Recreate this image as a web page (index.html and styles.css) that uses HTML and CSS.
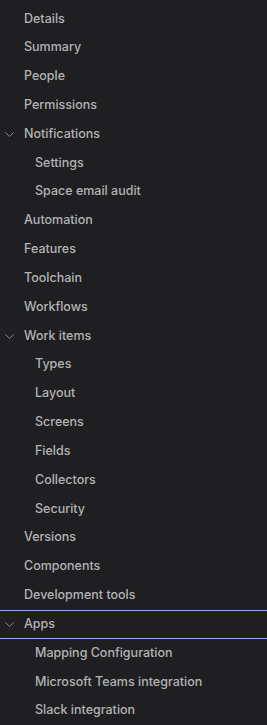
FILE: index.html
```html
<!DOCTYPE html>
<html lang="en">
<head>
    <meta charset="UTF-8">
    <meta name="viewport" content="width=device-width, initial-scale=1.0">
    <title>Space settings</title>
    <link rel="stylesheet" href="styles.css">
</head>
<body>
    <nav class="sidebar">
        <div class="item">Details</div>
        <div class="item">Summary</div>
        <div class="item">People</div>
        <div class="item">Permissions</div>
        <div class="item group"><svg class="chevron" viewBox="0 0 9 5"><path d="M0.5 0.5 L4.5 4.5 L8.5 0.5"/></svg>Notifications</div>
        <div class="item sub">Settings</div>
        <div class="item sub">Space email audit</div>
        <div class="item">Automation</div>
        <div class="item">Features</div>
        <div class="item">Toolchain</div>
        <div class="item">Workflows</div>
        <div class="item group"><svg class="chevron" viewBox="0 0 9 5"><path d="M0.5 0.5 L4.5 4.5 L8.5 0.5"/></svg>Work items</div>
        <div class="item sub">Types</div>
        <div class="item sub">Layout</div>
        <div class="item sub">Screens</div>
        <div class="item sub">Fields</div>
        <div class="item sub">Collectors</div>
        <div class="item sub">Security</div>
        <div class="item">Versions</div>
        <div class="item">Components</div>
        <div class="item">Development tools</div>
        <div class="item group focused"><svg class="chevron" viewBox="0 0 9 5"><path d="M0.5 0.5 L4.5 4.5 L8.5 0.5"/></svg>Apps</div>
        <div class="item sub">Mapping Configuration</div>
        <div class="item sub">Microsoft Teams integration</div>
        <div class="item sub">Slack integration</div>
    </nav>
</body>
</html>
```

FILE: styles.css
```css
html, body {
    margin: 0;
    padding: 0;
    background: #1f1f21;
}
.sidebar {
    font-family: Inter, "Noto Sans", sans-serif;
    font-size: 12.5px;
    font-weight: 500;
    color: #b3b3b5;
    padding-top: 4.5px;
}
.item {
    position: relative;
    height: 28.83px;
    line-height: 28.83px;
    padding-left: 24px;
    box-sizing: border-box;
    white-space: nowrap;
}
.item.sub {
    padding-left: 35px;
}
.chevron {
    position: absolute;
    left: 5px;
    top: 12px;
    width: 9px;
    height: 5px;
    fill: none;
    stroke: #8c8c8e;
    stroke-width: 1;
}
.focused {
    border-top: 1px solid #85b0ef;
    border-bottom: 1px solid #85b0ef;
    line-height: 26.83px;
}
.focused .chevron {
    top: 11px;
}
```
